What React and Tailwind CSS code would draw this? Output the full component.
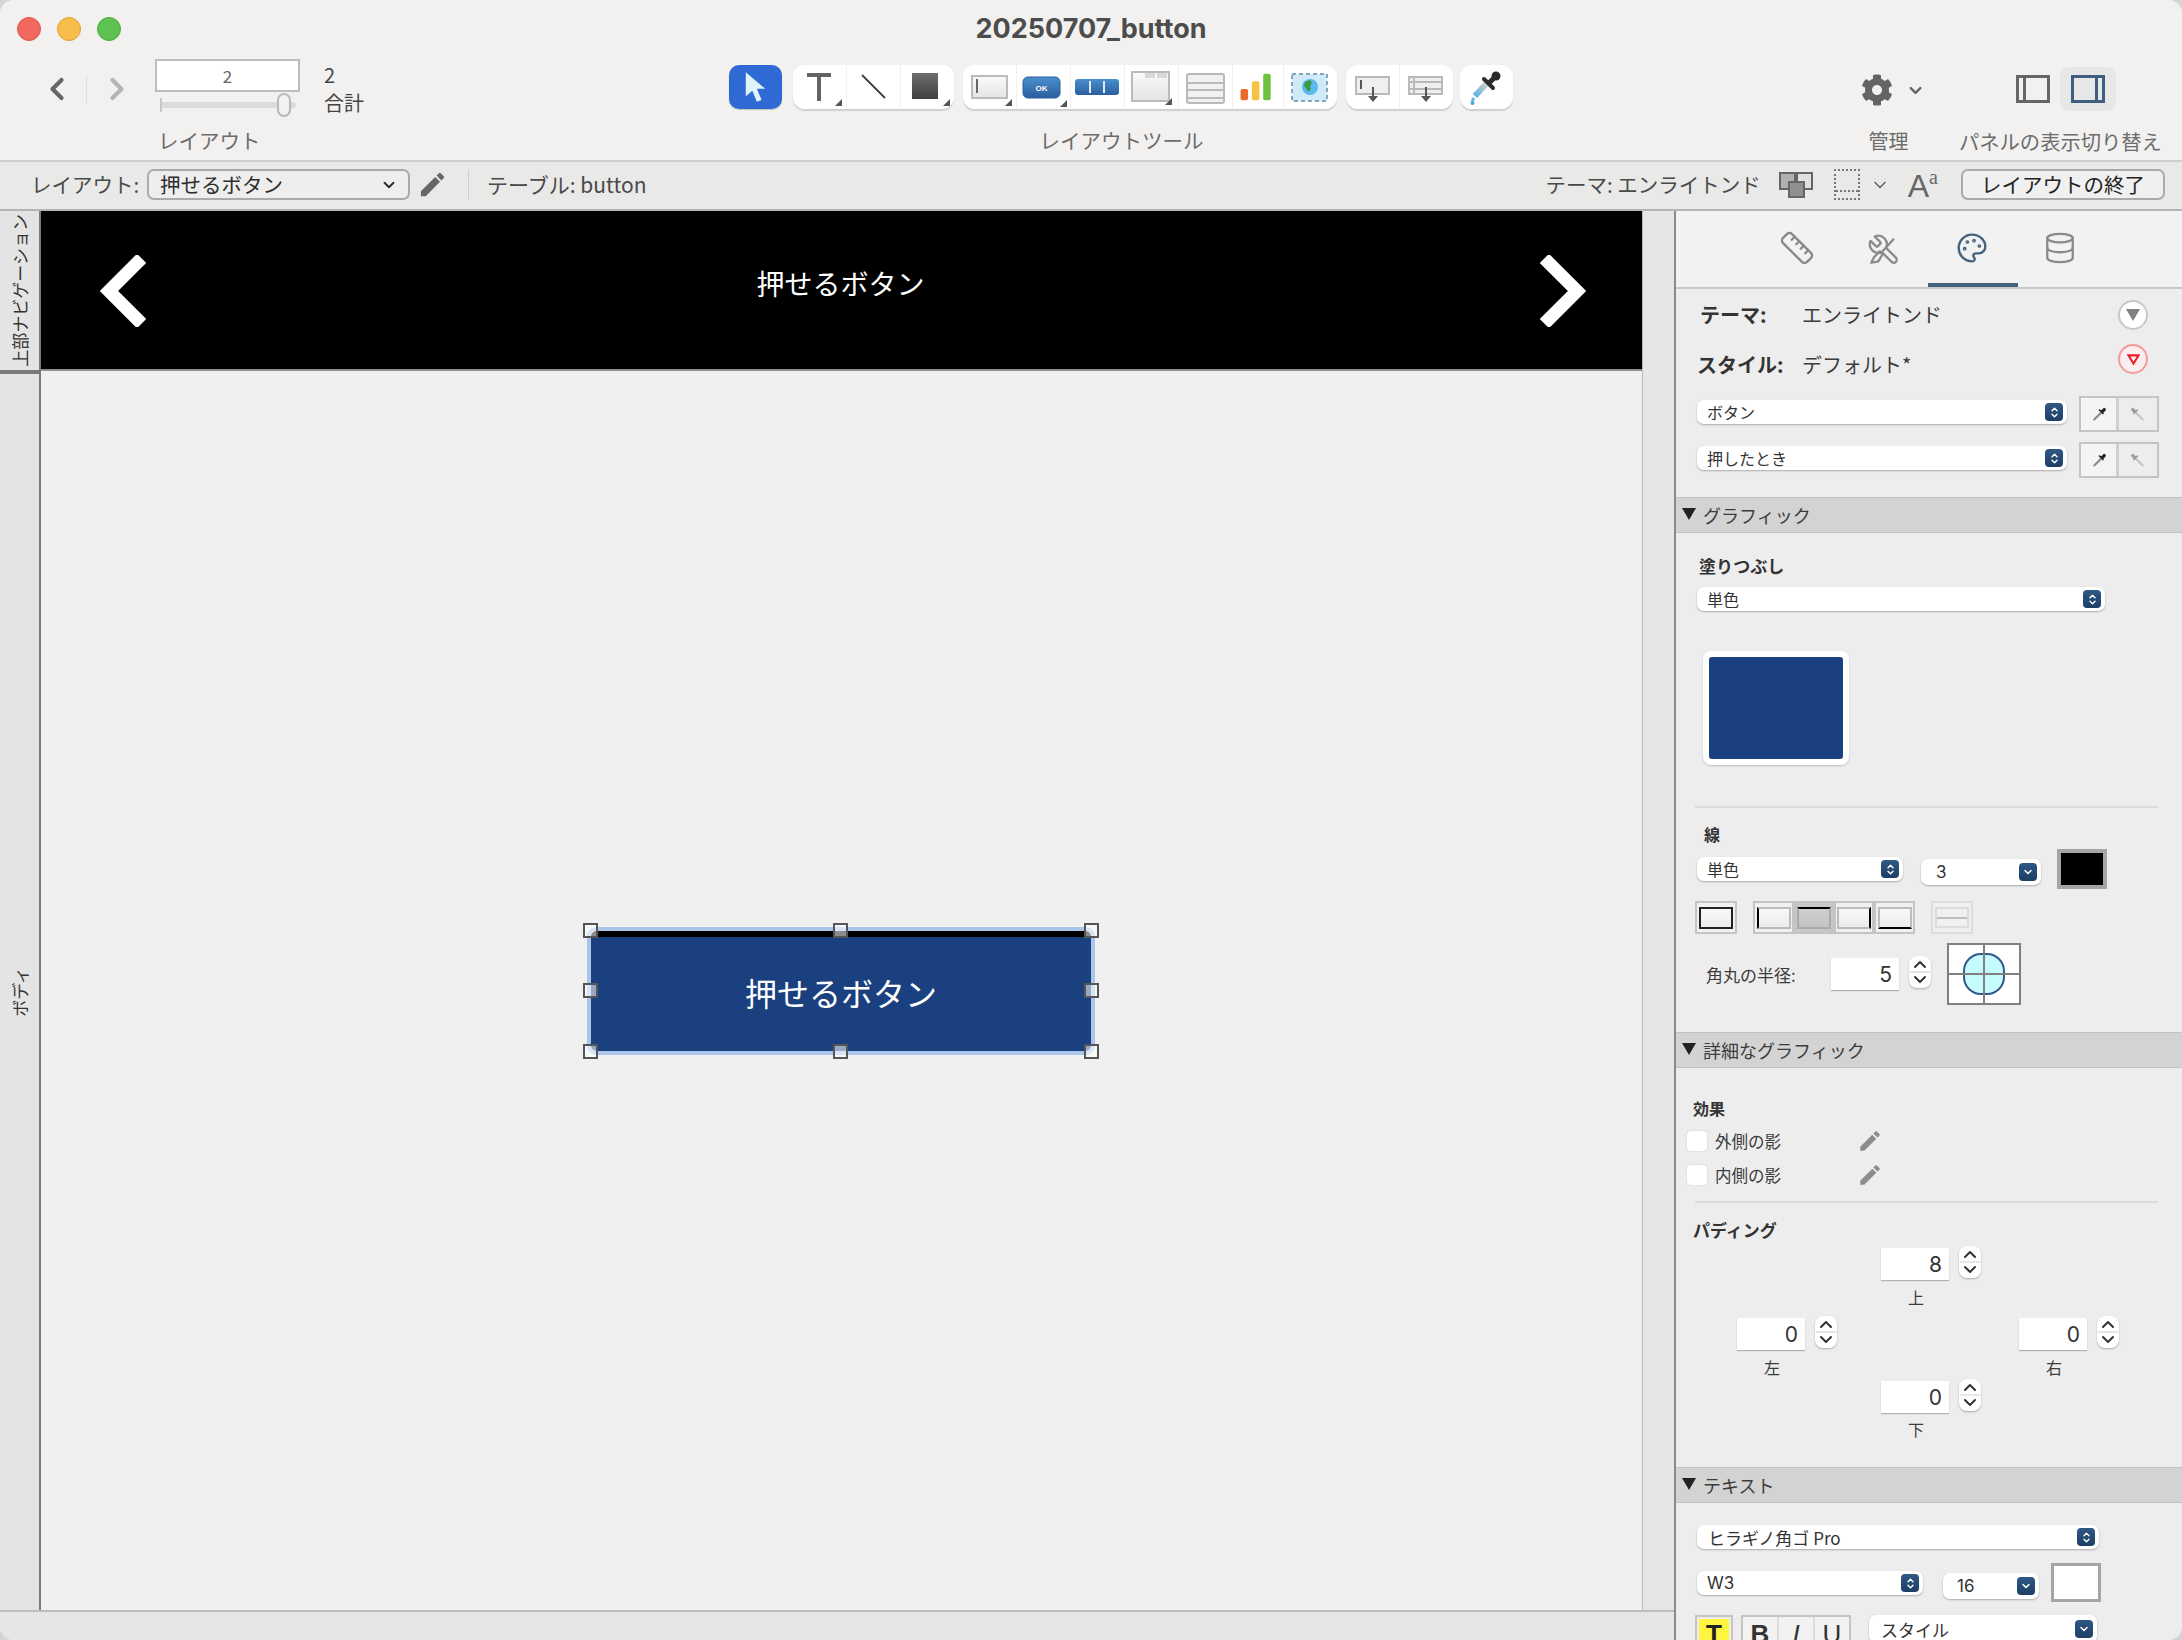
import React from 'react';
import { FaCog } from 'react-icons/fa';
import { MdEdit } from 'react-icons/md';
import { ChevronDown, ChevronLeft, ChevronRight, Database, Palette, Ruler } from 'lucide-react';

const UpDown = ({ className = '' }) => (
  <svg viewBox="0 0 18 18" className={className} fill="none" stroke="currentColor" strokeWidth="1.7" strokeLinecap="round" strokeLinejoin="round">
    <path d="M6 7l3-3 3 3" />
    <path d="M6 11l3 3 3-3" />
  </svg>
);

// popup field with the small blue stepper on the right end
const Sel = ({ label, className = '', down = false, labelClass = 'pl-[10px] text-[16px]' }) => (
  <div className={`flex items-center justify-between bg-white rounded-[7px] shadow-[0_1px_2px_rgba(0,0,0,0.28)] pr-[4px] text-[#333] shrink-0 ${className}`}>
    <span className={`leading-none ${labelClass}`}>{label}</span>
    <span className="w-[18px] h-[18px] rounded-[4px] bg-gradient-to-b from-[#2f5884] to-[#1c3f66] text-white flex items-center justify-center">
      {down ? <ChevronDown size={12} strokeWidth={3} /> : <UpDown className="w-[15px] h-[15px]" />}
    </span>
  </div>
);

const Dropper = ({ className = '' }) => (
  <svg viewBox="0 0 24 24" className={className}>
    <path d="M4 21l1-3 9-9 2 2-9 9z" fill="#888" />
    <path d="M13 7l4 4 1.5-1.5 2-2a2 2 0 0 0-3-3l-2 2z" fill="#222" />
    <path d="M12 6l6 6" stroke="#222" strokeWidth="2" />
  </svg>
);

const DropperPair = () => (
  <div className="flex w-[80px] h-[36px] border-2 border-[#c4c4c4] shrink-0">
    <div className="w-[38px] bg-[#f4f4f4] flex items-center justify-center border-r-[3px] border-[#cfcfcf]">
      <Dropper className="w-[18px] h-[18px]" />
    </div>
    <div className="flex-1 bg-[#eeeeee] flex items-center justify-center opacity-40">
      <Dropper className="w-[18px] h-[18px] -scale-x-100" />
    </div>
  </div>
);

const SectionHead = ({ label }) => (
  <div className="h-[36px] bg-[#d3d3d3] border-y border-[#c2c2c2] flex items-center shrink-0">
    <svg viewBox="0 0 14 12" className="w-[14px] h-[12px] ml-[6px] mb-[2px]"><path d="M0 0h14L7 12z" fill="#222" /></svg>
    <span className="ml-[7px] text-[18px] leading-none text-[#3c3c3c]">{label}</span>
  </div>
);

const NumField = ({ value }) => (
  <div className="flex items-start shrink-0">
    <div className="w-[68px] h-[32px] bg-white shadow-[0_1px_1px_rgba(0,0,0,0.25)] flex items-center justify-end pr-[7px] font-['Inter',sans-serif] text-[21px] leading-none text-[#333]">{value}</div>
    <div className="ml-[10px] w-[22px] h-[32px] -mt-[2px] bg-white rounded-[8px] shadow-[0_1px_2px_rgba(0,0,0,0.28)]">
      <svg viewBox="0 0 22 32" className="w-[22px] h-[32px]" fill="none" strokeLinecap="round" strokeLinejoin="round">
        <path d="M1 16h20" stroke="#dedede" strokeWidth="1.5" />
        <path d="M6 11l5-5 5 5M6 21l5 5 5-5" stroke="#333" strokeWidth="2" />
      </svg>
    </div>
  </div>
);

const Corner = ({ x = 42, y = 34 }) => <path d={`M${x + 7} ${y}v7h-7z`} fill="#555" />;

// toolbar icons, drawn on the cell's own 53x44 box
const tools = {
  t: <><path d="M14 8h24v4H28v24h-4V12H14z" fill="#636363" /><Corner /></>,
  line: <path d="M15 10l23 23" stroke="#444" strokeWidth="2" />,
  shape: <><rect x="11" y="8" width="26" height="26" fill="url(#dark)" /><Corner /></>,
  field: <><rect x="9" y="11" width="35" height="22" fill="url(#light)" stroke="#bbb" strokeWidth="2" /><path d="M14 14v14" stroke="#666" strokeWidth="2" /><Corner /></>,
  ok: <><rect x="6" y="12" width="37" height="21" rx="5" fill="url(#blue)" stroke="#2c5f9e" /><text x="24.5" y="26" textAnchor="middle" fontSize="8" fontWeight="700" fill="#fff" fontFamily="Liberation Sans, sans-serif">OK</text><Corner x={43} y={35} /></>,
  segment: <><rect x="4" y="14" width="44" height="16" rx="3" fill="url(#blue)" /><path d="M19 16v12M33 16v12" stroke="#dfeaf6" strokeWidth="2" /></>,
  portal: <><rect x="7" y="7" width="37" height="29" fill="url(#light)" stroke="#bbb" strokeWidth="2" /><rect x="20" y="8" width="10" height="5" fill="#d8d8d8" /><rect x="32" y="8" width="10" height="5" fill="#d8d8d8" /><Corner x={40} y={33} /></>,
  table: <><rect x="8" y="9" width="37" height="29" rx="2" fill="#f1f1f1" stroke="#b9b9b9" strokeWidth="2" /><path d="M8 18h37M8 25h37M8 33h37" stroke="#b9b9b9" strokeWidth="2" /></>,
  chart: <><rect x="8" y="24" width="8" height="12" rx="2" fill="#ea6a2b" /><rect x="20" y="16" width="8" height="20" rx="2" fill="#f5c244" /><rect x="32" y="8" width="8" height="28" rx="2" fill="#6ec13f" /></>,
  web: <><rect x="8" y="9" width="35" height="27" fill="#cfeafa" stroke="#8aa3b5" strokeWidth="2" strokeDasharray="4 3" /><circle cx="26" cy="22" r="8" fill="#5bb8ec" /><path d="M21 17l5-2 2 3-2 3 1 3-3 3-2-4-2-2z" fill="#3c9a3f" /></>,
  subA: <><rect x="10" y="12" width="33" height="17" fill="#efefef" stroke="#b9b9b9" strokeWidth="2" /><path d="M15 15v9" stroke="#555" strokeWidth="2" /><path d="M27 22v10" stroke="#555" strokeWidth="2" /><path d="M22 31h10l-5 6z" fill="#555" /></>,
  subB: <><rect x="9" y="12" width="33" height="17" fill="#efefef" stroke="#b9b9b9" strokeWidth="2" /><path d="M9 17h33M9 24h33M14 12v17" stroke="#b9b9b9" strokeWidth="2" /><path d="M26 22v10" stroke="#555" strokeWidth="2" /><path d="M21 31h10l-5 6z" fill="#555" /></>,
  dropper: <><path d="M15 31l11-12" stroke="url(#sky)" strokeWidth="6" /><path d="M14 33l-2 3" stroke="#55b3e4" strokeWidth="3" /><circle cx="12.5" cy="38" r="2" fill="#4aa7d8" /><path d="M24 14l9 9" stroke="#2b2b2b" strokeWidth="4" strokeLinecap="round" /><path d="M29 18l5-5" stroke="#2b2b2b" strokeWidth="5" /><circle cx="36" cy="11" r="4.5" fill="#2b2b2b" /></>,
};

const Tool = ({ icon, width = 'w-[53px]' }) => (
  <div className={`${width} h-[44px] bg-white flex items-center justify-center shrink-0`}>
    <svg viewBox="0 0 53 44" className="w-[53px] h-[44px]">
      <defs>
        <linearGradient id="dark" x1="0" y1="0" x2="0" y2="1"><stop offset="0" stopColor="#6e6e6e" /><stop offset="1" stopColor="#404040" /></linearGradient>
        <linearGradient id="light" x1="0" y1="0" x2="0" y2="1"><stop offset="0" stopColor="#fafafa" /><stop offset="1" stopColor="#e4e4e4" /></linearGradient>
        <linearGradient id="blue" x1="0" y1="0" x2="0" y2="1"><stop offset="0" stopColor="#4a8fcd" /><stop offset="1" stopColor="#2a5f9f" /></linearGradient>
        <linearGradient id="sky" gradientUnits="userSpaceOnUse" x1="15" y1="31" x2="26" y2="19"><stop offset="0" stopColor="#55b3e4" /><stop offset="1" stopColor="#cfcfcf" /></linearGradient>
      </defs>
      {tools[icon]}
    </svg>
  </div>
);

const ToolGroup = ({ children }) => (
  <div className="flex gap-px rounded-[12px] overflow-hidden shadow-[0_2px_1px_rgba(0,0,0,0.14)] shrink-0">{children}</div>
);

const Toolbar = () => (
  <div className="h-[162px] bg-[#f2f1f0] border-b-2 border-[#cfcfcf] shrink-0">
    <div className="h-[58px] grid grid-cols-[1fr_auto_1fr] items-center">
      <div className="flex items-center gap-[16px] pl-[17px]">
        <span className="w-[24px] h-[24px] rounded-full bg-[#f1685f] border border-[#dc564d]" />
        <span className="w-[24px] h-[24px] rounded-full bg-[#f7bc4a] border border-[#de9f34]" />
        <span className="w-[24px] h-[24px] rounded-full bg-[#5dc24f] border border-[#4aa93e]" />
      </div>
      <div className="font-['Inter',sans-serif] font-bold text-[27px] leading-none text-[#4c4c4c] mb-[2px]">20250707_button</div>
    </div>
    <div className="flex items-start">
      <div className="w-[155px] pl-[39px] pt-[13px] flex items-center shrink-0 text-[#666]">
        <ChevronLeft size={36} strokeWidth={2.8} />
        <span className="w-px h-[27px] bg-[#dedede] ml-[11px] mr-[12px]" />
        <ChevronRight size={36} strokeWidth={2.8} className="text-[#b4b4b4]" />
      </div>
      <div className="w-[145px] shrink-0 mt-[1px]">
        <div className="h-[33px] bg-white border-2 border-[#bdbdbd] flex items-center justify-center text-[17px] leading-none text-[#666]">2</div>
        <div className="h-[25px] flex items-center relative pl-[5px] pr-[4px]">
          <span className="w-[2px] h-[14px] bg-[#c8c8c8]" />
          <span className="flex-1 h-[6px] bg-[#dcdcdc] rounded-r-full" />
          <span className="absolute right-[9px] top-[1px] w-[14px] h-[24px] rounded-full bg-[#f2f2f2] border-2 border-[#b8b8b8]" />
        </div>
        <div className="mt-[11px] pl-[3px] text-[20.5px] leading-[24px] text-[#6c6c6c]">レイアウト</div>
      </div>
      <div className="w-[429px] pl-[24px] shrink-0 pt-[3px] text-[20px] leading-[28px] text-[#444]">
        <div>2</div>
        <div>合計</div>
      </div>
      <div className="w-[785px] shrink-0 pt-[7px]">
        <div className="flex items-start">
          <div className="w-[53px] h-[44px] rounded-[10px] bg-[#2f69d4] flex items-center justify-center shadow-[0_1px_1px_rgba(0,0,0,0.2)]">
            <svg viewBox="0 0 28 34" className="w-[26px] h-[32px]"><path d="M3 1v26l7-6 5 12 5-2-5-12h9z" fill="#dff3fb" /></svg>
          </div>
          <div className="ml-[11px]"><ToolGroup><Tool icon="t" /><Tool icon="line" /><Tool icon="shape" /></ToolGroup></div>
          <div className="ml-[9px]"><ToolGroup><Tool icon="field" /><Tool icon="ok" /><Tool icon="segment" /><Tool icon="portal" /><Tool icon="table" /><Tool icon="chart" width="w-[50px]" /><Tool icon="web" /></ToolGroup></div>
          <div className="ml-[9px]"><ToolGroup><Tool icon="subA" /><Tool icon="subB" /></ToolGroup></div>
          <div className="ml-[7px]"><ToolGroup><Tool icon="dropper" /></ToolGroup></div>
        </div>
        <div className="mt-[19px] text-center text-[20.5px] leading-[24px] text-[#6c6c6c]">レイアウトツール</div>
      </div>
      <div className="w-[347px] shrink-0" />
      <div className="w-[99px] shrink-0 pt-[16px] flex flex-col">
        <div className="flex items-center h-[32px] text-[#646464]">
          <FaCog size={32} />
          <ChevronDown size={19} strokeWidth={3} className="ml-[13px]" />
        </div>
        <div className="mt-[23px] text-center pr-[44px] whitespace-nowrap text-[20px] leading-[24px] text-[#6c6c6c]">管理</div>
      </div>
      <div className="w-[165px] shrink-0 pt-[9px]">
        <div className="flex items-center h-[44px] pl-[56px]">
          <div className="w-[34px] h-[28px] border-[3px] border-[#666] flex"><span className="w-[3px] ml-[4px] bg-[#666]" /></div>
          <div className="ml-[10px] w-[56px] h-[44px] rounded-[9px] bg-[#e7e7e7] flex items-center justify-center">
            <div className="w-[34px] h-[28px] border-[3px] border-[#3f5f80] flex justify-end"><span className="w-[3px] mr-[4px] bg-[#3f5f80]" /></div>
          </div>
        </div>
        <div className="mt-[18px] -ml-[1px] whitespace-nowrap text-[20.3px] leading-[24px] text-[#6c6c6c]">パネルの表示切り替え</div>
      </div>
    </div>
  </div>
);

const SubBar = () => (
  <div className="h-[49px] bg-[#e9e9e8] border-b-2 border-[#b5b5b5] flex items-center pb-[2px] text-[21px] text-[#4a4a4a] shrink-0">
    <span className="ml-[31px] w-[116px] shrink-0 text-[20.5px]">レイアウト:</span>
    <div className="w-[263px] h-[31px] rounded-[7px] border-2 border-[#aaa] bg-[#eeeeee] flex items-center justify-between pl-[11px] pr-[10px] text-[20.5px] text-[#2d2d2d]">
      <span>押せるボタン</span>
      <ChevronDown size={18} strokeWidth={2.5} />
    </div>
    <MdEdit size={31} className="ml-[7px] text-[#666]" />
    <span className="ml-[20px] w-px h-[30px] bg-[#cfcfcf]" />
    <span className="ml-[18px]">テーブル: button</span>
    <span className="ml-auto text-[20.5px]">テーマ: エンライトンド</span>
    <div className="ml-[18px] relative w-[34px] h-[26px]">
      <div className="w-[17px] h-[18px] bg-[#b0b0b0] border-2 border-[#666]" />
      <div className="absolute right-0 top-0 w-[17px] h-[18px] bg-[#e0e0e0] border-2 border-[#666]" />
      <div className="absolute left-[9px] bottom-0 w-[17px] h-[17px] bg-[#8f8f8f] border-2 border-[#666]" />
    </div>
    <div className="ml-[21px] w-[26px] h-[31px] border-2 border-dotted border-[#777] flex items-end"><span className="w-full border-b-2 border-dotted border-[#777] mb-[6px]" /></div>
    <ChevronDown size={20} className="ml-[10px] text-[#666]" />
    <span className="ml-[18px] font-['Liberation_Serif',serif] text-[#666] leading-none"><span className="text-[32px] font-['Liberation_Sans',sans-serif]">A</span><span className="text-[20px] align-[13px]">a</span></span>
    <div className="ml-[23px] mr-[17px] w-[204px] h-[31px] rounded-[7px] border-2 border-[#aaa] bg-[#f0f0f0] flex items-center justify-center text-[20.5px] text-[#222]">レイアウトの終了</div>
  </div>
);

const Handle = ({ pos }) => (
  <span className={`absolute w-[15px] h-[15px] border-2 border-[#555] bg-white/55 ${pos}`} />
);

const handles = [
  'left-[-8px] top-[-8px]', 'left-[242px] top-[-8px]', 'right-[-8px] top-[-8px]',
  'left-[-8px] top-[52px]', 'right-[-8px] top-[52px]',
  'left-[-8px] bottom-[-8px]', 'left-[242px] bottom-[-8px]', 'right-[-8px] bottom-[-8px]',
];

const Canvas = () => (
  <div className="flex-1 flex min-h-0">
    <div className="w-[41px] bg-[#e4e4e4] border-r-2 border-[#7a7a7a] flex flex-col shrink-0">
      <div className="h-[159px] flex items-center justify-center">
        <span className="[writing-mode:vertical-rl] [text-orientation:sideways] rotate-180 text-[17px] leading-none text-[#333] whitespace-nowrap">上部ナビゲーション</span>
      </div>
      <div className="h-[4px] bg-[#7a7a7a] shrink-0" />
      <div className="flex-1 flex items-center justify-center">
        <span className="[writing-mode:vertical-rl] [text-orientation:sideways] rotate-180 text-[17px] leading-none text-[#333] whitespace-nowrap">ボディ</span>
      </div>
    </div>
    <div className="flex-1 relative bg-[#f0f0f0]">
      <div className="h-[160px] bg-black border-b-2 border-[#8f8f8f] flex items-center justify-between pl-[58px] pr-[55px]">
        <svg viewBox="0 0 47 72" className="w-[47px] h-[72px] mt-[2px]"><path d="M38 8L10 36l28 28" fill="none" stroke="#fff" strokeWidth="13" strokeLinecap="square" /></svg>
        <span className="text-[28px] leading-none text-white mb-[14px] mr-[5px]">押せるボタン</span>
        <svg viewBox="0 0 47 72" className="w-[47px] h-[72px] mt-[2px]"><path d="M9 8l28 28L9 64" fill="none" stroke="#fff" strokeWidth="13" strokeLinecap="square" /></svg>
      </div>
      <div className="absolute left-[550px] top-[720px] w-[500px] h-[120px]">
        <div className="w-full h-full rounded-[5px] bg-[#1a4080] border-t-[6px] border-black outline-[4px] outline-[#a9c5ec] flex items-center justify-center pb-[4px] text-[32px] leading-none text-white">押せるボタン</div>
        {handles.map((pos) => <Handle key={pos} pos={pos} />)}
      </div>
    </div>
    <div className="w-[32px] bg-[#e6e6e6] border-l border-[#b9b9b9] shrink-0" />
  </div>
);

const BorderBtn = ({ sides, active = false, faded = false, wrap = 'w-[42px]' }) => (
  <div className={`${wrap} h-[33px] border-2 border-[#c4c4c4] flex items-center justify-center ${active ? 'bg-[#c8c8c8]' : 'bg-[#f0f0f0]'} ${faded ? 'opacity-50' : ''}`}>
    <div className={`w-[34px] h-[22px] bg-gradient-to-b from-[#f8f8f8] to-[#ececec] ${sides}`} />
  </div>
);

const Pencil = () => <MdEdit size={26} className="text-[#8c8c8c] ml-auto" />;

const Panel = () => (
  <div className="w-[508px] bg-[#eeeded] border-l-2 border-[#8a8a8a] flex flex-col overflow-hidden shrink-0">
    <div className="h-[78px] bg-[#f2f2f2] border-b-2 border-[#c8c8c8] flex shrink-0 relative text-[#8a8a8a]">
      <div className="w-[164px] shrink-0 flex items-center justify-center pl-[78px] mb-[2px]"><Ruler size={36} strokeWidth={1.6} /></div>
      <div className="w-[88px] shrink-0 flex items-center justify-center mt-[1px]">
        <svg viewBox="0 0 24 24" className="w-[34px] h-[34px]" fill="none" stroke="currentColor" strokeWidth="1.6" strokeLinejoin="round">
          <path transform="translate(24 0) scale(-1 1)" d="M14.7 6.3a1 1 0 0 0 0 1.4l1.6 1.6a1 1 0 0 0 1.4 0l3.77-3.77a6 6 0 0 1-7.94 7.94l-6.91 6.91a2.12 2.12 0 0 1-3-3l6.91-6.91a6 6 0 0 1 7.94-7.94l-3.76 3.76z" />
          <path d="M19 4l-9 10M9 13l2 2-3 5-5 1 2-4z" />
        </svg>
      </div>
      <div className="w-[90px] shrink-0 flex items-center justify-center border-b-[4px] border-[#44637f] text-[#44637f]"><Palette size={32} strokeWidth={1.8} className="mr-[2px] mt-[2px]" /></div>
      <div className="w-[88px] shrink-0 flex items-center justify-center pr-[4px] mb-[2px]"><Database size={34} strokeWidth={1.6} /></div>
    </div>

    <div className="h-[208px] shrink-0 text-[#3c3c3c]">
      <div className="mt-[11px] h-[30px] flex items-center">
        <span className="ml-[24px] w-[102px] text-[20px] font-bold text-[#333]">テーマ:</span>
        <span className="text-[20px]">エンライトンド</span>
        <span className="ml-auto mr-[34px] w-[30px] h-[30px] rounded-full bg-white border-2 border-[#c8c8c8] flex items-center justify-center">
          <svg viewBox="0 0 14 12" className="w-[14px] h-[12px]"><path d="M0 0h14L7 12z" fill="#808080" /></svg>
        </span>
      </div>
      <div className="mt-[14px] h-[52px] flex items-start">
        <span className="ml-[21px] w-[105px] mt-[6px] text-[20px] leading-[30px] font-bold text-[#333]">スタイル:</span>
        <span className="mt-[6px] text-[20px] leading-[30px]">デフォルト*</span>
        <span className="ml-auto mr-[34px] w-[30px] h-[30px] rounded-full bg-[#fbeeee] border-2 border-[#f49a9a] flex items-center justify-center">
          <svg viewBox="0 0 14 12" className="w-[13px] h-[11px]"><path d="M1.5 1.5h11L7 10.5z" fill="#fff" stroke="#ee1c2c" strokeWidth="2.2" /></svg>
        </span>
      </div>
      <div className="h-[46px] flex items-start pl-[21px]">
        <Sel label="ボタン" className="w-[370px] h-[24px] mt-[4px]" />
        <div className="ml-[12px]"><DropperPair /></div>
      </div>
      <div className="h-[36px] flex items-start pl-[21px]">
        <Sel label="押したとき" className="w-[370px] h-[24px] mt-[4px]" />
        <div className="ml-[12px]"><DropperPair /></div>
      </div>
    </div>

    <SectionHead label="グラフィック" />
    <div className="h-[499px] shrink-0 flex flex-col text-[#333]">
      <div className="mt-[21px] ml-[23px] text-[17px] leading-[24px] font-bold">塗りつぶし</div>
      <Sel label="単色" className="w-[408px] h-[24px] mt-[9px] ml-[21px]" />
      <div className="mt-[40px] ml-[27px] w-[146px] h-[114px] bg-white rounded-[8px] p-[6px] shadow-[0_1px_2px_rgba(0,0,0,0.2)]">
        <div className="w-full h-full bg-[#1a4080] rounded-[3px]" />
      </div>
      <div className="mt-[41px] ml-[19px] w-[463px] h-[2px] bg-[#dcdcdc]" />
      <div className="mt-[14px] ml-[28px] text-[16px] leading-[24px] font-bold">線</div>
      <div className="mt-[3px] h-[40px] flex items-start pl-[21px]">
        <Sel label="単色" className="w-[206px] h-[24px] mt-[8px]" />
        <Sel label="3" down labelClass="pl-[15px] text-[17px] font-['Inter',sans-serif]" className="ml-[18px] w-[120px] h-[26px] mt-[10px]" />
        <div className="ml-[16px] w-[50px] h-[40px] border-[4px] border-[#a5a5a5] bg-black shrink-0" />
      </div>
      <div className="mt-[12px] flex pl-[19px]">
        <BorderBtn sides="border-2 border-[#222]" />
        <div className="ml-[16px] flex">
          <BorderBtn wrap="w-[41px]" sides="border-2 border-[#bbb] border-l-black" />
          <BorderBtn wrap="w-[40px]" active sides="border-2 border-[#aaa] border-t-black !from-[#cfcfcf] !to-[#c4c4c4]" />
          <BorderBtn wrap="w-[40px]" sides="border-2 border-[#bbb] border-r-black" />
          <BorderBtn wrap="w-[41px]" sides="border-2 border-[#bbb] border-b-black" />
        </div>
        <div className="ml-[16px] w-[42px] h-[33px] border-2 border-[#dcdcdc] bg-[#f0f0f0] flex items-center justify-center">
          <div className="w-[34px] h-[21px] border-2 border-[#dcdcdc] flex items-center"><span className="w-full h-[2px] bg-[#bdbdbd]" /></div>
        </div>
      </div>
      <div className="mt-[9px] h-[62px] flex items-center pl-[30px]">
        <span className="w-[125px] text-[17px] leading-none text-[#3c3c3c]">角丸の半径:</span>
        <NumField value="5" />
        <div className="ml-[16px] w-[74px] h-[62px] border-2 border-[#808080] bg-white relative flex items-center justify-center">
          <div className="w-[42px] h-[42px] rounded-[18px] bg-[#c6fbfd] border-2 border-[#33598a]" />
          <span className="absolute left-0 right-0 top-[28px] h-[2px] bg-[#808080]" />
          <span className="absolute top-0 bottom-0 left-[34px] w-[2px] bg-[#808080]" />
        </div>
      </div>
    </div>

    <SectionHead label="詳細なグラフィック" />
    <div className="h-[399px] shrink-0 flex flex-col text-[#3c3c3c]">
      <div className="mt-[28px] ml-[17px] text-[16px] leading-[24px] font-bold text-[#333]">効果</div>
      <div className="mt-[11px] h-[20px] w-[196px] ml-[11px] flex items-center">
        <span className="w-[20px] h-[20px] bg-white rounded-[3px] shadow-[0_0_1px_rgba(0,0,0,0.4)]" />
        <span className="ml-[8px] text-[16.5px] leading-none">外側の影</span>
        <Pencil />
      </div>
      <div className="mt-[14px] h-[20px] w-[196px] ml-[11px] flex items-center">
        <span className="w-[20px] h-[20px] bg-white rounded-[3px] shadow-[0_0_1px_rgba(0,0,0,0.4)]" />
        <span className="ml-[8px] text-[16.5px] leading-none">内側の影</span>
        <Pencil />
      </div>
      <div className="mt-[16px] ml-[19px] w-[463px] h-[2px] bg-[#dcdcdc]" />
      <div className="mt-[15px] ml-[17px] text-[17px] leading-[24px] font-bold text-[#333]">パディング</div>
      <div className="mt-[6px] ml-[205px]"><NumField value="8" /></div>
      <div className="mt-[5px] ml-[205px] w-[70px] text-center text-[16px] leading-[24px]">上</div>
      <div className="mt-[9px] ml-[61px] flex">
        <NumField value="0" />
        <div className="w-[182px]" />
        <NumField value="0" />
      </div>
      <div className="mt-[5px] ml-[61px] flex text-[16px] leading-[24px]">
        <div className="w-[70px] text-center">左</div>
        <div className="w-[212px]" />
        <div className="w-[70px] text-center">右</div>
      </div>
      <div className="mt-[2px] ml-[205px]"><NumField value="0" /></div>
      <div className="mt-[4px] ml-[205px] w-[70px] text-center text-[16px] leading-[24px]">下</div>
    </div>

    <SectionHead label="テキスト" />
    <div className="flex flex-col text-[#333]">
      <Sel label="ヒラギノ角ゴ Pro" labelClass="pl-[11px] text-[17px]" className="mt-[22px] ml-[21px] w-[402px] h-[24px]" />
      <div className="mt-[14px] h-[39px] flex items-start pl-[21px]">
        <Sel label="W3" labelClass="pl-[10px] text-[17px] font-['Inter',sans-serif]" className="mt-[8px] w-[226px] h-[24px]" />
        <Sel label="16" down labelClass="pl-[14px] text-[17px] font-['Inter',sans-serif]" className="mt-[10px] ml-[20px] w-[96px] h-[26px]" />
        <div className="ml-[12px] w-[50px] h-[39px] border-[3px] border-[#a5a5a5] bg-white shrink-0" />
      </div>
      <div className="mt-[13px] flex items-start pl-[19px]">
        <div className="w-[38px] h-[40px] border-2 border-[#c4c4c4] p-[2px]"><div className="h-full bg-[#fdf53e] text-center text-[26px] leading-[30px] font-bold font-['Liberation_Sans',sans-serif] text-[#222]">T</div></div>
        <div className="ml-[8px] flex w-[110px] h-[40px] border-2 border-[#c4c4c4] font-['Liberation_Sans',sans-serif] text-[26px] leading-[34px] text-[#333] bg-[#f2f2f2]">
          <span className="flex-1 text-center font-bold border-r-2 border-[#ddd]">B</span>
          <span className="flex-1 text-center italic border-r-2 border-[#ddd]">I</span>
          <span className="flex-1 text-center">U</span>
        </div>
        <Sel label="スタイル" down labelClass="pl-[12px] text-[17px]" className="ml-[18px] w-[228px] h-[28px]" />
      </div>
    </div>
  </div>
);

const App = () => (
  <div className="w-[2182px] h-[1640px] bg-[#d4d4d4]">
    <div className="w-full h-full rounded-[14px] overflow-hidden flex flex-col font-['Noto_Sans_CJK_JP','Noto_Sans',sans-serif] bg-[#f0f0f0]">
      <Toolbar />
      <SubBar />
      <div className="flex-1 flex min-h-0">
        <div className="w-[1674px] flex flex-col shrink-0">
          <Canvas />
          <div className="h-[30px] bg-[#e6e6e6] border-t-2 border-[#bdbdbd] shrink-0" />
        </div>
        <Panel />
      </div>
    </div>
  </div>
);

export default App;
